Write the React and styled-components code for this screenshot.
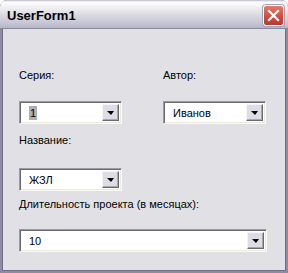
import React from "react";
import styled, { createGlobalStyle } from "styled-components";

const GlobalStyle = createGlobalStyle`
  html, body {
    margin: 0;
    padding: 0;
    background: #ffffff;
  }
  body {
    font-family: "Liberation Sans", Arial, sans-serif;
  }
`;

const Window = styled.div`
  width: 288px;
  height: 273px;
  box-sizing: border-box;
  display: flex;
  flex-direction: column;
  background: #8d8ca2;
  border-radius: 7px 7px 0 0;
  padding: 0 2px 2px 2px;
  overflow: hidden;
`;

const TitleBar = styled.div`
  height: 28px;
  margin: 0 -2px;
  padding: 0 4px 0 7px;
  display: flex;
  align-items: center;
  justify-content: space-between;
  border-radius: 7px 7px 0 0;
  border-bottom: 1px solid #8a899c;
  background: linear-gradient(
    to bottom,
    #b9b8c8 0px,
    #ffffff 2px,
    #f4f4f7 6px,
    #dcdce4 14px,
    #c9c8d6 22px,
    #b7b6c8 28px
  );
`;

const Title = styled.span`
  font-family: "Liberation Sans", Arial, sans-serif;
  font-weight: bold;
  font-size: 13px;
  color: #000000;
  padding-top: 2px;
`;

const CloseButton = styled.div`
  width: 21px;
  height: 21px;
  box-sizing: border-box;
  border: 1px solid #ffffff;
  border-radius: 3px;
  background: linear-gradient(to bottom, #e27c6c, #cc4a40 60%, #b83a32);
  display: flex;
  align-items: center;
  justify-content: center;
  box-shadow: 0 0 0 1px #a3a2b4;
  margin-top: 2px;
`;

const Body = styled.div`
  flex: 1;
  background: #e1e0e5;
  border-left: 1px solid #6f6e82;
  border-right: 1px solid #6f6e82;
  border-bottom: 1px solid #6f6e82;
  padding: 40px 0 0 16px;
  display: flex;
  flex-direction: column;
  align-items: flex-start;
`;

const Row = styled.div`
  display: flex;
  gap: 41px;
`;

const Field = styled.div`
  display: flex;
  flex-direction: column;
  margin-top: ${({ $top }) => $top || 0}px;
`;

const Label = styled.span`
  font-size: 11px;
  line-height: 13px;
  height: 13px;
  color: #000000;
  margin-bottom: ${({ $gap }) => $gap}px;
  white-space: nowrap;
`;

const Combo = styled.div`
  width: ${({ $width }) => $width}px;
  height: 23px;
  box-sizing: border-box;
  display: flex;
  align-items: stretch;
  background: #ffffff;
  border-top: 1px solid #9a9aa0;
  border-left: 1px solid #9a9aa0;
  border-right: 1px solid #fbfaf2;
  border-bottom: 1px solid #fbfaf2;
  box-shadow: inset 1px 1px 0 #6c6c70, inset -1px -1px 0 #ecebe0;
  padding: 2px;
`;

const Value = styled.div`
  flex: 1;
  display: flex;
  align-items: center;
  padding-left: 7px;
  font-size: 11px;
  color: #000000;
`;

const Selected = styled.span`
  background: #adadbf;
  line-height: 14px;
  padding: 0 1px;
`;

const DropButton = styled.div`
  width: 17px;
  box-sizing: border-box;
  background: #dedde3;
  border-top: 1px solid #f4f4f6;
  border-left: 1px solid #f4f4f6;
  border-right: 1px solid #6a6a6e;
  border-bottom: 1px solid #6a6a6e;
  box-shadow: inset -1px -1px 0 #a8a7b0;
  display: flex;
  align-items: center;
  justify-content: center;
`;

const Arrow = styled.span`
  width: 0;
  height: 0;
  border-left: 4px solid transparent;
  border-right: 3px solid transparent;
  border-top: 4px solid #000000;
  margin-top: 1px;
`;

const CloseIcon = () => (
  <svg width="13" height="13" viewBox="0 0 13 13">
    <path
      d="M2 2 L11 11 M11 2 L2 11"
      stroke="#ffffff"
      strokeWidth="2.2"
      strokeLinecap="square"
      fill="none"
    />
  </svg>
);

const ComboBox = ({ width, children }) => (
  <Combo $width={width}>
    <Value>{children}</Value>
    <DropButton>
      <Arrow />
    </DropButton>
  </Combo>
);

export default function App() {
  return (
    <>
      <GlobalStyle />
      <Window>
        <TitleBar>
          <Title>UserForm1</Title>
          <CloseButton>
            <CloseIcon />
          </CloseButton>
        </TitleBar>
        <Body>
          <Row>
            <Field>
              <Label $gap={19}>Серия:</Label>
              <ComboBox width={103}>
                <Selected>1</Selected>
              </ComboBox>
            </Field>
            <Field>
              <Label $gap={19}>Автор:</Label>
              <ComboBox width={103}>Иванов</ComboBox>
            </Field>
          </Row>
          <Field $top={10}>
            <Label $gap={21}>Название:</Label>
            <ComboBox width={103}>ЖЗЛ</ComboBox>
          </Field>
          <Field $top={7}>
            <Label $gap={18}>Длительность проекта (в месяцах):</Label>
            <ComboBox width={248}>10</ComboBox>
          </Field>
        </Body>
      </Window>
    </>
  );
}
